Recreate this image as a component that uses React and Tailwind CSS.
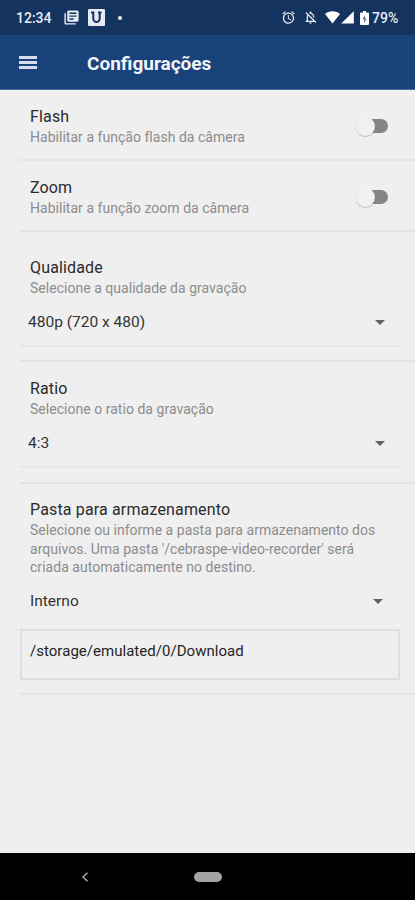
import { useState } from "react";
import { MdAlarm, MdLibraryBooks, MdOutlineNotificationsOff } from "react-icons/md";

function StatusBar() {
  return (
    <div className="flex h-[35px] items-center bg-[#15335f] pl-4 pr-[16px] text-[#e6ebf3]">
      <span className="w-[36px] whitespace-nowrap text-[14px] font-medium leading-4">12:34</span>
      <MdLibraryBooks className="ml-[11px] size-[17px]" />
      <svg className="ml-[8px] size-[17px]" viewBox="0 0 17 17">
        <rect width="17" height="17" rx="1" fill="currentColor" />
        <path d="M3 3.500h3.200M10 3.500h3.500M5.300 3v6.800a3.200 3.200 0 0 0 6.400 0V3" fill="none" stroke="#15335f" strokeWidth="2" />
      </svg>
      <span className="ml-[13px] size-[4px] rounded-full bg-[#eef2f8]" />
      <MdAlarm className="ml-auto size-[15px]" />
      <MdOutlineNotificationsOff className="ml-[7px] size-[15px]" />
      <svg className="ml-[7px] h-[13px] w-[15px]" viewBox="0 0 16 13" preserveAspectRatio="none" fill="white">
        <path d="M8 12.500 0 3C2 1.200 4.800 .3 8 .3s6 .9 8 2.700z" />
      </svg>
      <svg className="ml-px h-[13px] w-[13px]" viewBox="0 0 13 13" fill="white">
        <path d="M12.800.2v12.300H.2z" />
      </svg>
      <svg className="ml-[6px] mr-[3px] h-[14px] w-[9px]" viewBox="0 0 9 14">
        <path d="M3 0h3v1.500h2a1 1 0 0 1 1 1V13a1 1 0 0 1-1 1H1a1 1 0 0 1-1-1V2.500a1 1 0 0 1 1-1h2z" fill="white" />
        <path d="M5 4 2.500 8.300h1.700V12l2.500-4.500H5z" fill="#5c7293" />
      </svg>
      <span className="w-[27px] whitespace-nowrap text-[14px] font-medium leading-4">79%</span>
    </div>
  );
}

function Header() {
  return (
    <header className="flex h-[55px] items-center border-b border-[#4d6d9e] bg-[#19417a] text-[#f1f4f9]">
      <button className="ml-[19px] grid w-[18px] gap-[2px]" type="button" aria-label="Menu">
        <span className="h-[3px] bg-[#d5deec]" />
        <span className="h-[3px] bg-[#d5deec]" />
        <span className="h-[3px] bg-[#d5deec]" />
      </button>
      <h1 className="ml-[50px] pt-[4px] text-[19px] font-bold leading-6">Configurações</h1>
    </header>
  );
}

function Heading({ title, children }) {
  return (
    <div className="text-[#8c8c8c]">
      <h2 className="text-[16px] leading-[20px] tracking-[0.15px] text-[#2b2b2b]">{title}</h2>
      <p className="pt-px text-[14px] leading-[18.5px] tracking-[0.03px]">{children}</p>
    </div>
  );
}

function Toggle({ label }) {
  const [on, setOn] = useState(false);

  return (
    <button
      className="mr-[27px] mt-[9px] flex h-5 w-[32px] items-center"
      type="button"
      role="switch"
      aria-label={label}
      aria-checked={on}
      onClick={() => setOn(!on)}
    >
      <span className={`flex h-[14px] w-full items-center rounded-full ${on ? "justify-end bg-[#19417a]" : "bg-linear-to-r from-transparent from-45% to-[#858585] to-45%"}`}>
        <span className="size-[19px] rounded-full bg-[#f1f1f1] shadow-[0_1px_1px_rgba(0,0,0,0.22)]" />
      </span>
    </button>
  );
}

function SwitchRow({ title, text }) {
  return (
    <section className="ml-5 flex h-[71px] items-start justify-between border-b-2 border-[#e4e4e4] pl-[10px] pt-[17px]">
      <Heading title={title}>{text}</Heading>
      <Toggle label={title} />
    </section>
  );
}

function Caret() {
  return (
    <svg className="h-[5px] w-[10px]" viewBox="0 0 10 5" fill="#626262">
      <path d="M0 0h10L5 5z" />
    </svg>
  );
}

function SelectField({ value }) {
  return (
    <div className="mr-[15px] flex h-[49px] items-center justify-between border-b-2 border-[#e6e6e6] pl-2 pr-[15px] pt-[3px] text-[15.5px] text-[#333]">
      <span>{value}</span>
      <Caret />
    </div>
  );
}

export default function App() {
  return (
    <div className="flex h-[900px] w-[415px] flex-col overflow-hidden bg-[#efefef] font-[Roboto,sans-serif]">
      <StatusBar />
      <Header />
      <main className="flex-1">
        <SwitchRow title="Flash" text="Habilitar a função flash da câmera" />
        <SwitchRow title="Zoom" text="Habilitar a função zoom da câmera" />
        <section className="ml-5 h-[130px] border-b-2 border-[#e4e4e4] pt-[26px]">
          <div className="pl-[10px]">
            <Heading title="Qualidade">Selecione a qualidade da gravação</Heading>
          </div>
          <SelectField value="480p (720 x 480)" />
        </section>
        <section className="ml-5 h-[122px] border-b-2 border-[#e4e4e4] pt-[17px]">
          <div className="pl-[10px]">
            <Heading title="Ratio">Selecione o ratio da gravação</Heading>
          </div>
          <SelectField value="4:3" />
        </section>
        <section className="ml-5 h-[211px] border-b-2 border-[#e4e4e4] pt-[16px]">
          <div className="pl-[10px]">
            <Heading title="Pasta para armazenamento">
              Selecione ou informe a pasta para armazenamento dos
              <br />
              arquivos. Uma pasta '/cebraspe-video-recorder' será
              <br />
              criada automaticamente no destino.
            </Heading>
          </div>
          <div className="mt-[13px] flex h-6 items-center justify-between pl-[10px] pr-[32px] text-[15.5px] text-[#333]">
            <span>Interno</span>
            <Caret />
          </div>
          <div className="mr-[15px] mt-[15px] h-[51px] border-2 border-[#dedede] pl-2 pt-[8px] text-[15px] leading-6 tracking-[0.03px] text-[#252525]">
            /storage/emulated/0/Download
          </div>
        </section>
      </main>
      <nav className="flex h-[47px] items-center bg-black">
        <svg className="ml-[81px] h-[10px] w-[8px]" viewBox="0 0 8 10" fill="none" stroke="#a5a5a5" strokeWidth="1.500">
          <path d="M6.500.8 2 5l4.500 4.200" />
        </svg>
        <span className="ml-[105px] h-[10px] w-[28px] rounded-full bg-[#a3a3a3]" />
      </nav>
    </div>
  );
}
